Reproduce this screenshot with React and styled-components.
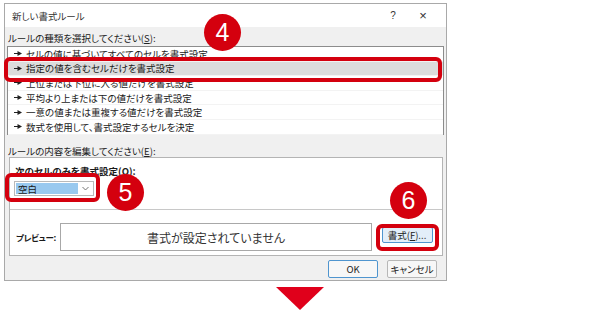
import React from "react";
import styled, { createGlobalStyle } from "styled-components";

const GlobalStyle = createGlobalStyle`
  body {
    margin: 0;
    background: #ffffff;
    font-family: "Noto Sans CJK JP", "Noto Sans", sans-serif;
    font-feature-settings: "palt";
    color: #1a1a1a;
  }
`;

const Page = styled.div`
  position: relative;
  width: 600px;
  height: 320px;
  overflow: hidden;
  display: flex;
  flex-direction: column;
  align-items: flex-start;
`;

const Dialog = styled.div`
  margin: 3px 0 0 4px;
  width: 443px;
  height: 278px;
  box-sizing: border-box;
  border: 1px solid #a9a9a9;
  background: #f0f0f0;
  display: flex;
  flex-direction: column;
`;

const TitleBar = styled.div`
  height: 23px;
  background: #ffffff;
  display: flex;
  align-items: center;
  padding: 0 8px 0 7px;
  font-size: 9.5px;
  color: #333;
`;

const Title = styled.div`
  flex: 1;
`;

const TitleButton = styled.div`
  width: 30px;
  text-align: center;
  font-family: "Liberation Sans", sans-serif;
  font-size: ${(p) => p.$size || 11}px;
  color: #333;
`;

const Body = styled.div`
  flex: 1;
  display: flex;
  flex-direction: column;
  padding: 0 2px 2px 2px;
`;

const Label = styled.div`
  margin-top: ${(p) => p.$top}px;
  padding-left: 1px;
  height: ${(p) => p.$height}px;
  line-height: ${(p) => p.$height}px;
  font-size: 9.5px;
  color: #222;
`;

const RuleList = styled.div`
  margin-top: 1px;
  height: 89px;
  box-sizing: border-box;
  border: 1px solid #8c8c8c;
  background: #ffffff;
`;

const RuleItem = styled.div`
  height: 14.6px;
  display: flex;
  align-items: center;
  padding-left: 6px;
  font-size: 9.5px;
  background: ${(p) => (p.$selected ? "#dcdcdc" : "transparent")};
  border-bottom: 1px solid #f3f3f3;
  box-sizing: border-box;
`;

const Pointer = styled.svg`
  width: 8px;
  height: 5px;
  margin-right: 4px;
  flex-shrink: 0;
`;

const ContentPanel = styled.div`
  margin: 0 1px 0 2px;
  height: 99px;
  box-sizing: border-box;
  border: 1px solid #b4b4b4;
  background: #ffffff;
  display: flex;
  flex-direction: column;
`;

const ConditionArea = styled.div`
  height: 52px;
  border-bottom: 1px solid #c8c8c8;
  padding: 6px 0 0 4px;
  box-sizing: border-box;
`;

const ConditionTitle = styled.div`
  font-size: 9.5px;
  font-weight: 700;
  height: 14px;
  line-height: 14px;
  padding-left: 1px;
`;

const Select = styled.div`
  margin-top: 3px;
  width: 80px;
  height: 15px;
  box-sizing: border-box;
  border: 1px solid #b9b9b9;
  display: flex;
  align-items: center;
  padding: 1px;
`;

const SelectValue = styled.div`
  width: 62px;
  height: 100%;
  background: #99c9ef;
  font-size: 9.5px;
  line-height: 12px;
  padding-left: 2px;
  box-sizing: border-box;
`;

const Chevron = styled.div`
  flex: 1;
  display: flex;
  justify-content: center;
`;

const PreviewArea = styled.div`
  flex: 1;
  display: flex;
  align-items: center;
  padding: 0 0 2px 6px;
`;

const PreviewLabel = styled.div`
  width: 44px;
  white-space: nowrap;
  font-size: 8.5px;
  letter-spacing: -0.3px;
  font-weight: 700;
  margin-top: 11px;
`;

const PreviewBox = styled.div`
  width: 312px;
  height: 28px;
  box-sizing: border-box;
  border: 1px solid #a8a8a8;
  display: flex;
  align-items: center;
  justify-content: center;
  font-size: 12px;
  color: #333;
  margin-top: 11px;
`;

const PreviewSpacer = styled.div`
  flex: 1;
  display: flex;
  justify-content: center;
  align-items: center;
  margin-top: 7px;
`;

const ButtonRow = styled.div`
  margin-top: 4px;
  display: flex;
  justify-content: flex-end;
  gap: 9px;
  padding-right: 7px;
`;

const DialogButton = styled.div`
  width: ${(p) => p.$width}px;
  height: ${(p) => p.$height}px;
  box-sizing: border-box;
  border: 1px solid ${(p) => (p.$primary ? "#4f95cf" : "#b7b7b7")};
  background: ${(p) => (p.$accent ? "#e3eef9" : "#f7f7f7")};
  border-radius: 2px;
  display: flex;
  align-items: center;
  justify-content: center;
  font-size: 9.5px;
  color: #222;
`;

const RedFrame = styled.div`
  position: absolute;
  left: ${(p) => p.$x}px;
  top: ${(p) => p.$y}px;
  width: ${(p) => p.$w}px;
  height: ${(p) => p.$h}px;
  box-sizing: border-box;
  border: 4px solid #d4000e;
  border-radius: 6px;
`;

const StepBadge = styled.div`
  position: absolute;
  left: ${(p) => p.$x - 18}px;
  top: ${(p) => p.$y - 18}px;
  width: 37px;
  height: 37px;
  border-radius: 50%;
  background: #d4000e;
  color: #ffffff;
  display: flex;
  align-items: center;
  justify-content: center;
  font-family: "Liberation Sans", sans-serif;
  font-size: 25px;
`;

const DownArrow = styled.div`
  margin: 6px 0 0 276px;
  width: 0;
  height: 0;
  border-left: 24px solid transparent;
  border-right: 24px solid transparent;
  border-top: 23px solid #e0001b;
`;

const rules = [
  "セルの値に基づいてすべてのセルを書式設定",
  "指定の値を含むセルだけを書式設定",
  "上位または下位に入る値だけを書式設定",
  "平均より上または下の値だけを書式設定",
  "一意の値または重複する値だけを書式設定",
  "数式を使用して、書式設定するセルを決定",
];

export default function App() {
  return (
    <Page>
      <GlobalStyle />
      <Dialog>
        <TitleBar>
          <Title>新しい書式ルール</Title>
          <TitleButton $size={10}>?</TitleButton>
          <TitleButton $size={13}>×</TitleButton>
        </TitleBar>
        <Body>
          <Label $top={4} $height={14}>
            ルールの種類を選択してください(<u>S</u>):
          </Label>
          <RuleList>
            {rules.map((r, i) => (
              <RuleItem key={r} $selected={i === 1}>
                <Pointer viewBox="0 0 8 5">
                  <path d="M0 2.5 H4" stroke="#222" strokeWidth="1" />
                  <path d="M3.5 0 L8 2.5 L3.5 5 Z" fill="#222" />
                </Pointer>
                {r}
              </RuleItem>
            ))}
          </RuleList>
          <Label $top={10} $height={12}>
            ルールの内容を編集してください(<u>E</u>):
          </Label>
          <ContentPanel>
            <ConditionArea>
              <ConditionTitle>
                次のセルのみを書式設定(<u>O</u>):
              </ConditionTitle>
              <Select>
                <SelectValue>空白</SelectValue>
                <Chevron>
                  <svg width="7" height="5" viewBox="0 0 7 5">
                    <path d="M0.5 1 L3.5 4 L6.5 1" fill="none" stroke="#666" strokeWidth="0.9" />
                  </svg>
                </Chevron>
              </Select>
            </ConditionArea>
            <PreviewArea>
              <PreviewLabel>プレビュー:</PreviewLabel>
              <PreviewBox>書式が設定されていません</PreviewBox>
              <PreviewSpacer>
                <DialogButton $width={51} $height={16} $primary $accent>
                  書式(<u>F</u>)...
                </DialogButton>
              </PreviewSpacer>
            </PreviewArea>
          </ContentPanel>
          <ButtonRow>
            <DialogButton $width={50} $height={18} $primary>
              OK
            </DialogButton>
            <DialogButton $width={50} $height={18}>
              キャンセル
            </DialogButton>
          </ButtonRow>
        </Body>
      </Dialog>
      <DownArrow />

      <RedFrame $x={4} $y={57} $w={438} $h={25} />
      <RedFrame $x={5} $y={173} $w={95} $h={29} />
      <RedFrame $x={376} $y={224} $w={63} $h={27} />
      <StepBadge $x={222} $y={32}>4</StepBadge>
      <StepBadge $x={125} $y={192}>5</StepBadge>
      <StepBadge $x={408} $y={200}>6</StepBadge>
    </Page>
  );
}
